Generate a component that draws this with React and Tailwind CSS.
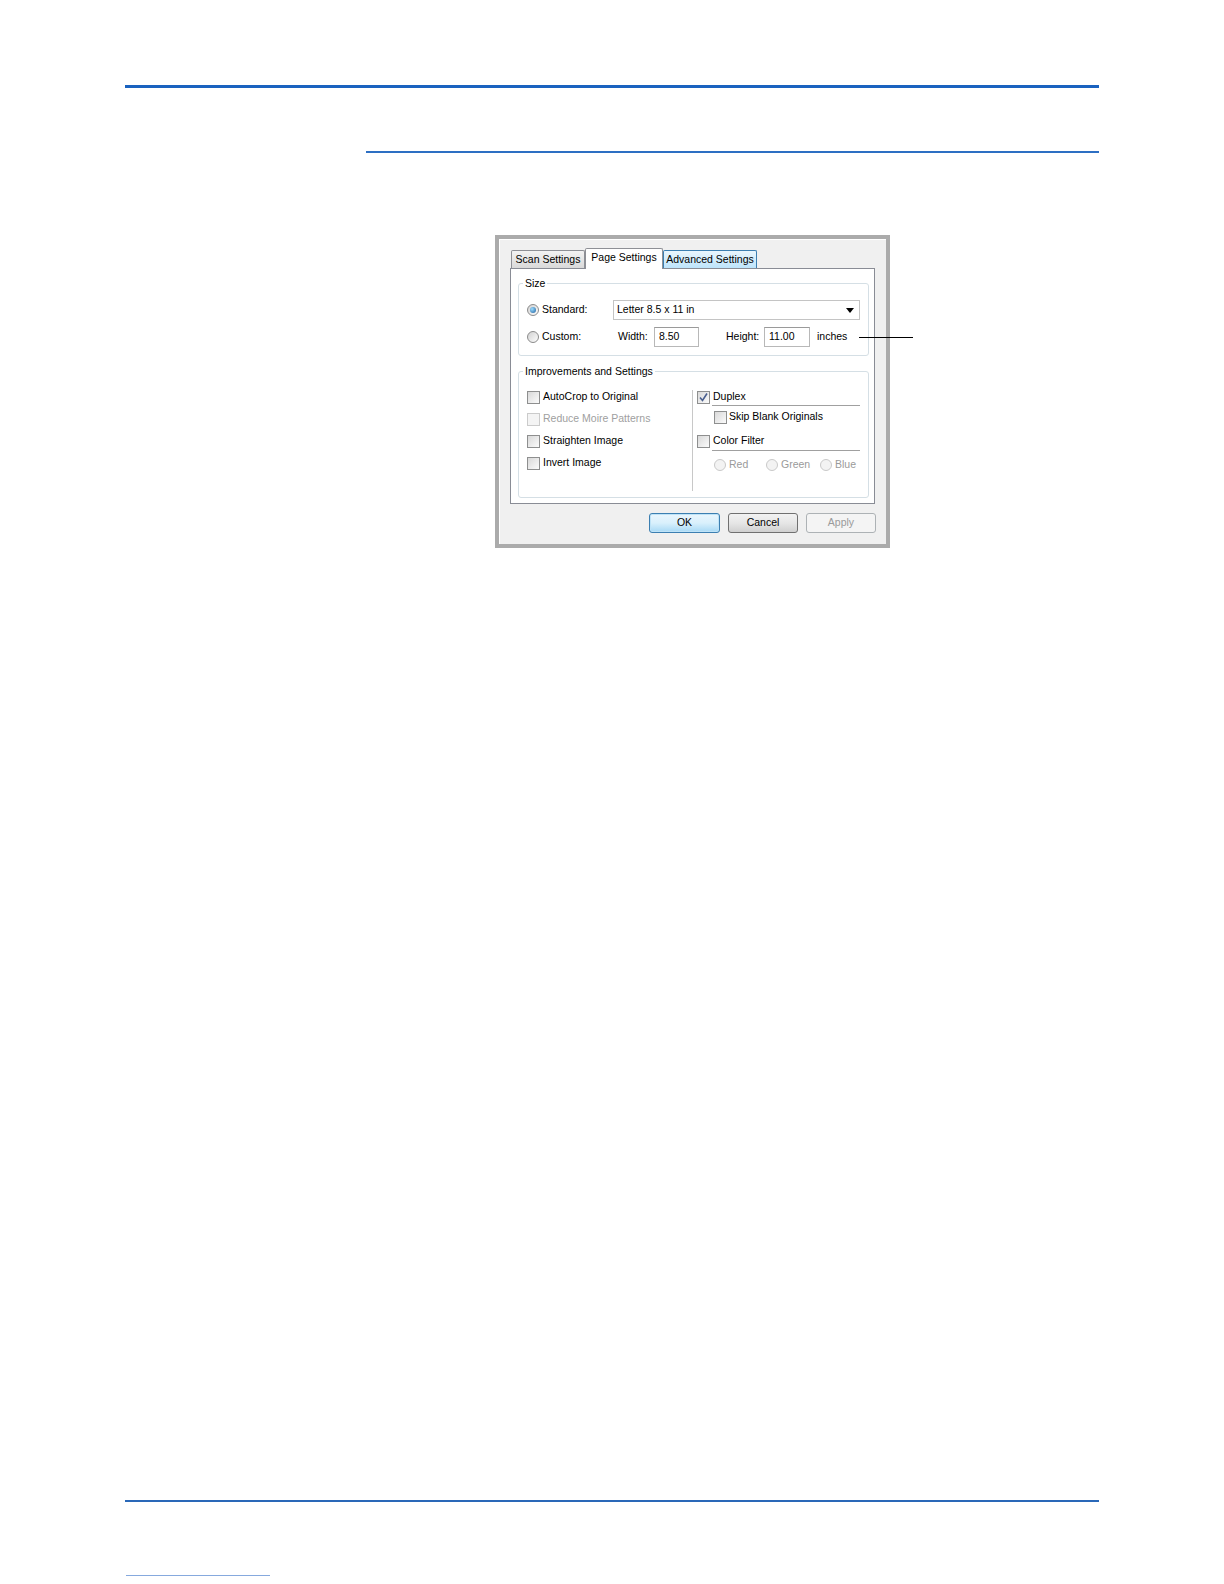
import React from 'react'

const font = { fontFamily: '"Liberation Sans", Arial, sans-serif' }

const Radio = ({ checked, disabled }) => (
  <span
    className={`w-[12px] h-[12px] rounded-full border shrink-0 flex items-center justify-center ${
      disabled
        ? 'border-[#c9c9c9] bg-[#f3f3f3]'
        : 'border-[#8b8b8b] bg-gradient-to-br from-[#d2d2d2] to-[#fdfdfd]'
    }`}
  >
    {checked && (
      <span className="w-[6px] h-[6px] rounded-full bg-[radial-gradient(circle_at_35%_35%,#9bdcff,#1d5f9e)]" />
    )}
  </span>
)

const Check = ({ checked, disabled }) => (
  <span
    className={`w-[13px] h-[13px] border shrink-0 flex items-center justify-center ${
      disabled
        ? 'border-[#cbcbcb] bg-[#f4f4f4]'
        : 'border-[#8e8f8f] bg-gradient-to-br from-[#d9d9d9] to-[#fbfbfb]'
    }`}
  >
    {checked && (
      <svg width="11" height="11" viewBox="0 0 11 11">
        <path d="M2 5.5 L4.5 8.5 L9 1.5" fill="none" stroke="#4a5f8f" strokeWidth="1.6" />
      </svg>
    )}
  </span>
)

const Row = ({ children, className = '' }) => (
  <div className={`flex items-center h-[22px] ${className}`}>{children}</div>
)

const SizeGroup = () => (
  <fieldset className="border border-[#d5dfe5] rounded-[3px] ml-[7px] w-[351px] pl-[8px] pb-[8px]">
    <legend className="-ml-[4px] px-[2px] leading-[13px]">Size</legend>
    <div className="flex items-center h-[20px] mt-[10px]">
      <Radio checked />
      <span className="ml-[3px] w-[71px]">Standard:</span>
      <div className="w-[247px] h-[20px] border border-[#c4c4c4] bg-white flex items-center pl-[3px] pr-[5px]">
        <span className="flex-1">Letter 8.5 x 11 in</span>
        <svg width="8" height="5" viewBox="0 0 8 5">
          <path d="M0 0 H8 L4 5 Z" fill="#000" />
        </svg>
      </div>
    </div>
    <div className="flex items-center h-[20px] mt-[7px]">
      <Radio />
      <span className="ml-[3px] w-[76px]">Custom:</span>
      <span className="w-[36px]">Width:</span>
      <div className="w-[45px] h-[20px] border border-[#b8b8b8] border-t-[#9a9a9a] bg-white flex items-center pl-[4px]">8.50</div>
      <span className="ml-[27px] w-[38px]">Height:</span>
      <div className="w-[46px] h-[20px] border border-[#b8b8b8] border-t-[#9a9a9a] bg-white flex items-center pl-[4px]">11.00</div>
      <span className="ml-[7px]">inches</span>
    </div>
  </fieldset>
)

const ImproveGroup = () => (
  <fieldset className="border border-[#d5dfe5] rounded-[3px] ml-[7px] mt-[9px] w-[351px] h-[133px] pl-[8px]">
    <legend className="-ml-[4px] px-[2px] leading-[13px]">Improvements and Settings</legend>
    <div className="flex">
      <div className="w-[165px] pt-[8px]">
        <Row>
          <Check />
          <span className="ml-[3px]">AutoCrop to Original</span>
        </Row>
        <Row>
          <Check disabled />
          <span className="ml-[3px] text-[#a0a0a0]">Reduce Moire Patterns</span>
        </Row>
        <Row>
          <Check />
          <span className="ml-[3px]">Straighten Image</span>
        </Row>
        <Row className="h-[21px]">
          <Check />
          <span className="ml-[3px]">Invert Image</span>
        </Row>
      </div>
      <div className="w-px bg-[#c8c8c8] mt-[12px] h-[101px]" />
      <div className="pl-[4px] pt-[8px]">
        <div className="flex items-center h-[16px] mt-[3px]">
          <Check checked />
          <span className="ml-[3px]">Duplex</span>
        </div>
        <div className="ml-[15px] w-[148px] h-px bg-[#a0a0a0]" />
        <div className="flex items-center h-[20px] ml-[17px] mt-px">
          <Check />
          <span className="ml-[2px]">Skip Blank Originals</span>
        </div>
        <div className="flex items-center h-[16px] mt-[6px]">
          <Check />
          <span className="ml-[3px]">Color Filter</span>
        </div>
        <div className="ml-[15px] w-[148px] h-px bg-[#a0a0a0] mt-px" />
        <div className="flex items-center h-[20px] ml-[17px] mt-[4px] text-[#9a9a9a]">
          <Radio disabled />
          <span className="ml-[3px] w-[37px]">Red</span>
          <Radio disabled />
          <span className="ml-[3px] w-[39px]">Green</span>
          <Radio disabled />
          <span className="ml-[3px]">Blue</span>
        </div>
      </div>
    </div>
  </fieldset>
)

const Dialog = () => (
  <div className="relative ml-[370px] mt-[82px] w-[395px] h-[313px] border-[4px] border-[#ababab] bg-[#f0f0f0] shadow-[inset_1px_1px_0_#ffffff]">
    <div className="pt-[8px] pl-[11px]">
      <div className="flex items-end h-[21px] pl-px whitespace-nowrap">
        <div className="w-[74px] h-[18px] border border-b-0 border-[#8e9096] rounded-t-[2px] bg-gradient-to-b from-[#f3f3f3] to-[#d9d9d9] flex items-center justify-center">
          Scan Settings
        </div>
        <div className="relative z-10 w-[78px] h-[21px] -mb-px pb-[3px] border border-b-0 border-[#8e9096] rounded-t-[2px] bg-white flex items-center justify-center">
          Page Settings
        </div>
        <div className="w-[94px] h-[18px] border border-b-0 border-[#3c7fb1] rounded-t-[2px] bg-gradient-to-b from-[#eaf6fd] to-[#bde4fb] flex items-center justify-center">
          Advanced Settings
        </div>
      </div>
      <div className="w-[365px] h-[236px] border border-[#898c95] bg-white pt-[8px]">
        <SizeGroup />
        <ImproveGroup />
      </div>
      <div className="flex justify-end gap-[8px] mt-[9px] pr-[10px]">
        <button className="w-[71px] h-[20px] rounded-[3px] border border-[#3c7fb1] bg-gradient-to-b from-[#eaf6fd] via-[#d9f0fc] to-[#a7d9f5] shadow-[inset_0_0_0_1px_#bfe3f7]">
          OK
        </button>
        <button className="w-[70px] h-[20px] rounded-[3px] border border-[#707070] bg-gradient-to-b from-[#f2f2f2] via-[#e6e6e6] to-[#d0d0d0]">
          Cancel
        </button>
        <button className="w-[70px] h-[20px] rounded-[3px] border border-[#adb2b5] bg-[#f4f4f4] text-[#9a9a9a]">
          Apply
        </button>
      </div>
    </div>
    <div className="absolute left-[360px] top-[98px] w-[54px] h-px bg-black" />
  </div>
)

export default function App() {
  return (
    <div className="w-[1224px] h-[1584px] bg-white text-[10.5px] text-black" style={font}>
      <div className="pt-[85px] pl-[125px] w-[1099px]">
        <div className="h-[3px] bg-[#1a62bf]" />
        <div className="ml-[241px] mt-[63px] h-[2px] bg-[#2d6fc3]" />
        <Dialog />
        <div className="mt-[952px] h-[2px] bg-[#2a68b8]" />
        <div className="ml-px mt-[73px] w-[144px] h-px bg-[#86a9de]" />
      </div>
    </div>
  )
}
